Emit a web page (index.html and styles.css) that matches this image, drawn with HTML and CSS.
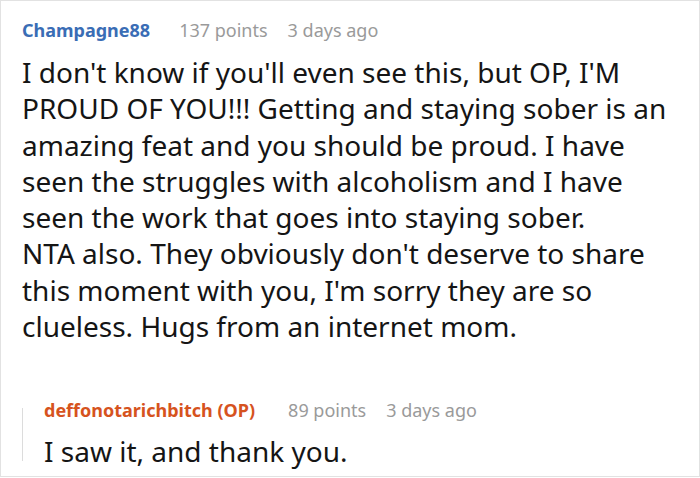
FILE: index.html
```html
<!DOCTYPE html>
<html>
<head>
<meta charset="utf-8">
<link rel="stylesheet" href="styles.css">
</head>
<body>
<div class="comment">
  <div class="meta">
    <span class="user">Champagne88</span>
    <span class="info">137 points</span>
    <span class="info">3 days ago</span>
  </div>
  <p class="text">I don't know if you'll even see this, but OP, I'M PROUD OF YOU!!! Getting and staying sober is an amazing feat and you should be proud. I have seen the struggles with alcoholism and I have seen the work that goes into staying sober.<br>NTA also. They obviously don't deserve to share this moment with you, I'm sorry they are so clueless. Hugs from an internet mom.</p>
  <div class="reply">
    <div class="bar"></div>
    <div class="reply-body">
      <div class="meta">
        <span class="user op">deffonotarichbitch (OP)</span>
        <span class="info">89 points</span>
        <span class="info">3 days ago</span>
      </div>
      <p class="text reply-text">I saw it, and thank you.</p>
    </div>
  </div>
</div>
</body>
</html>
```
FILE: styles.css
```css
html, body {
  margin: 0;
  padding: 0;
  background: #fff;
}
body {
  font-family: "Noto Sans", sans-serif;
  width: 700px;
  height: 478px;
  overflow: hidden;
}
.comment {
  box-sizing: border-box;
  width: 700px;
  height: 477px;
  border: 1px solid #e2e2e2;
  padding: 17px 20px 0 21px;
}
.meta {
  display: flex;
  gap: 20px;
  align-items: baseline;
  height: 24px;
  line-height: 24px;
  white-space: nowrap;
}
.user {
  font-weight: 700;
  font-size: 18px;
  color: #3a6db5;
  margin-right: 9px;
}
.user.op {
  color: #d6531e;
  margin-right: 13px;
}
.info {
  font-size: 18px;
  color: #9a9a9a;
}
.text {
  margin: 12px 0 0 0;
  font-size: 28px;
  line-height: 36.3px;
  color: #151515;
}
.reply {
  display: flex;
  margin-top: 54px;
}
.bar {
  width: 1px;
  background: #dcdcdc;
  margin: 10px 21px 9px 0;
  flex: none;
}
.reply-body {
  flex: 1;
}
.reply-text {
  margin-top: 11px;
}
```
